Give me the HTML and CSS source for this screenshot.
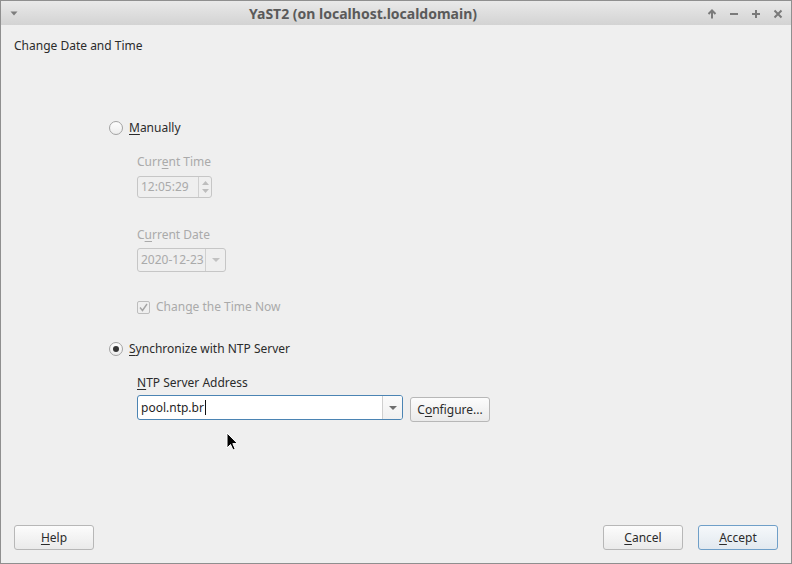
FILE: index.html
```html
<!DOCTYPE html>
<html lang="en">
<head>
<meta charset="utf-8">
<title>YaST2</title>
<link rel="stylesheet" href="styles.css">
</head>
<body>
<div class="window">
  <header class="titlebar">
    <span class="tb-menu">
      <svg width="8" height="5" viewBox="0 0 8 5"><path d="M0.5 0.5 H7.5 L4 4.5 Z" fill="#7d7d7d"/></svg>
    </span>
    <span class="tb-title">YaST2 (on localhost.localdomain)</span>
    <span class="tb-buttons">
      <span class="tb-btn"><svg width="10" height="10" viewBox="0 0 10 10"><path d="M5 9.5 V1.5 M1.5 5 L5 1.5 L8.5 5" fill="none" stroke="#7a7a7a" stroke-width="2"/></svg></span>
      <span class="tb-btn"><svg width="10" height="10" viewBox="0 0 10 10"><path d="M1 5 H9" fill="none" stroke="#7a7a7a" stroke-width="2"/></svg></span>
      <span class="tb-btn"><svg width="10" height="10" viewBox="0 0 10 10"><path d="M1 5 H9 M5 1 V9" fill="none" stroke="#7a7a7a" stroke-width="2"/></svg></span>
      <span class="tb-btn"><svg width="10" height="10" viewBox="0 0 10 10"><path d="M1.5 1.5 L8.5 8.5 M8.5 1.5 L1.5 8.5" fill="none" stroke="#7a7a7a" stroke-width="2"/></svg></span>
    </span>
  </header>

  <main class="content">
    <h1 class="heading">Change Date and Time</h1>

    <div class="form">
      <div class="radio-row">
        <span class="radio"></span>
        <span><u>M</u>anually</span>
      </div>
      <div class="sub">
        <div class="label disabled">Curr<u>e</u>nt Time</div>
        <div class="spin">
          <span class="field-text disabled">12:05:29</span>
          <span class="spin-btns">
            <svg width="7" height="4" viewBox="0 0 7 4"><path d="M0 4 L3.5 0 L7 4 Z" fill="#bdbdbd"/></svg>
            <svg width="7" height="4" viewBox="0 0 7 4"><path d="M0 0 L3.5 4 L7 0 Z" fill="#bdbdbd"/></svg>
          </span>
        </div>
        <div class="label disabled date-label">C<u>u</u>rrent Date</div>
        <div class="combo date-combo">
          <span class="field-text disabled">2020-12-23</span>
          <span class="combo-btn">
            <svg width="8" height="4" viewBox="0 0 8 4"><path d="M0 0 H8 L4 4 Z" fill="#c2c2c2"/></svg>
          </span>
        </div>
        <div class="check-row disabled">
          <span class="checkbox">
            <svg width="11" height="11" viewBox="0 0 11 11"><path d="M2 5.5 L4.5 8.5 L9 2" fill="none" stroke="#a5a5a5" stroke-width="1.4"/></svg>
          </span>
          <span>Chan<u>g</u>e the Time Now</span>
        </div>
      </div>

      <div class="radio-row sync-row">
        <span class="radio checked"></span>
        <span><u>S</u>ynchronize with NTP Server</span>
      </div>
      <div class="sub">
        <div class="label">
          <u>N</u>TP Server Address
        </div>
        <div class="ntp-row">
          <div class="combo ntp-combo">
            <span class="field-text">pool.ntp.br<span class="caret"></span></span>
            <span class="combo-btn">
              <svg width="8" height="4" viewBox="0 0 8 4"><path d="M0 0 H8 L4 4 Z" fill="#6e6e6e"/></svg>
            </span>
          </div>
          <button class="btn configure">C<u>o</u>nfigure...</button>
        </div>
      </div>
    </div>

    <footer class="buttons">
      <button class="btn"><u>H</u>elp</button>
      <div class="buttons-right">
        <button class="btn"><u>C</u>ancel</button>
        <button class="btn default"><u>A</u>ccept</button>
      </div>
    </footer>
  </main>

  <svg class="cursor" width="13" height="20" viewBox="0 0 13 20">
    <path d="M1 1 V16 L4.5 12.5 L7 18 L9.2 17 L6.8 11.6 L11.5 11.6 Z" fill="#000" stroke="#fff" stroke-width="1" stroke-linejoin="round"/>
  </svg>
</div>
</body>
</html>
```

FILE: styles.css
```css
* {
  box-sizing: border-box;
}

html, body {
  margin: 0;
  padding: 0;
  background: #efefef;
}

body {
  font-family: "Noto Sans", "Open Sans", sans-serif;
  font-size: 12px;
  line-height: 16px;
  color: #2b2b2b;
}

u {
  text-decoration: underline;
  text-underline-offset: 2px;
  text-decoration-thickness: 1px;
}

.window {
  position: relative;
  width: 792px;
  height: 564px;
  border: 1px solid #8f8f8f;
  background: #efefef;
  display: flex;
  flex-direction: column;
}

/* Title bar */
.titlebar {
  flex: none;
  height: 24px;
  display: flex;
  align-items: center;
  background: linear-gradient(#e9e9e9, #d3d3d3);
}

.tb-menu {
  width: 24px;
  display: flex;
  justify-content: center;
  padding-left: 2px;
  padding-top: 1px;
}

.tb-title {
  flex: 1;
  text-align: center;
  font-weight: bold;
  font-size: 14px;
  color: #5a5a5a;
  padding-top: 1px;
}

.tb-buttons {
  width: 90px;
  display: flex;
  padding-right: 2px;
}

.tb-btn {
  width: 22px;
  display: flex;
  justify-content: center;
  align-items: center;
  padding-top: 1px;
}

/* Content */
.content {
  flex: 1;
  display: flex;
  flex-direction: column;
  padding: 13px 13px 13px 13px;
}

.heading {
  margin: 0;
  font-size: 12px;
  font-weight: normal;
  line-height: 16px;
}

.form {
  margin-left: 95px;
  margin-top: 66px;
  display: flex;
  flex-direction: column;
  align-items: flex-start;
}

.radio-row {
  display: flex;
  align-items: center;
  gap: 6px;
  height: 16px;
}

.sync-row {
  margin-top: 26px;
}

.radio {
  width: 14px;
  height: 14px;
  border-radius: 50%;
  border: 1px solid #a3a3a3;
  background: linear-gradient(#fdfdfd, #ededed);
  display: flex;
  align-items: center;
  justify-content: center;
}

.radio.checked::after {
  content: "";
  width: 6px;
  height: 6px;
  border-radius: 50%;
  background: #353535;
}

.sub {
  margin-left: 28px;
  display: flex;
  flex-direction: column;
  align-items: flex-start;
}

.label {
  margin-top: 18px;
}

.date-label {
  margin-top: 29px;
}

.disabled {
  color: #aaaaaa;
}

.field-text {
  flex: 1;
  padding-left: 3px;
  display: flex;
  align-items: center;
}

/* Spin box */
.spin {
  margin-top: 6px;
  width: 75px;
  height: 22px;
  border: 1px solid #c6c6c6;
  border-radius: 3px;
  display: flex;
}

.spin-btns {
  width: 13px;
  border-left: 1px solid #d0d0d0;
  display: flex;
  flex-direction: column;
  align-items: center;
  justify-content: center;
  gap: 4px;
}

/* Combo boxes */
.combo {
  display: flex;
  border-radius: 3px;
}

.date-combo {
  margin-top: 5px;
  width: 89px;
  height: 24px;
  border: 1px solid #c6c6c6;
}

.combo-btn {
  width: 20px;
  border-left: 1px solid #d0d0d0;
  display: flex;
  align-items: center;
  justify-content: center;
}

.check-row {
  margin-top: 27px;
  display: flex;
  align-items: center;
  gap: 6px;
  height: 16px;
}

.checkbox {
  width: 13px;
  height: 13px;
  border: 1px solid #bdbdbd;
  border-radius: 2px;
  display: flex;
  align-items: center;
  justify-content: center;
}

.ntp-row {
  margin-top: 4px;
  display: flex;
  align-items: flex-start;
  gap: 7px;
}

.ntp-combo {
  width: 266px;
  height: 25px;
  border: 1px solid #4b84b3;
  background: #ffffff;
}

.ntp-combo .field-text {
  color: #1f1f1f;
}

.ntp-combo .combo-btn {
  background: linear-gradient(#fbfbfb, #f0f0f0);
  border-left-color: #cfcfcf;
  border-radius: 0 2px 2px 0;
}

.caret {
  display: inline-block;
  width: 1px;
  height: 15px;
  background: #111;
  margin-left: 1px;
}

/* Buttons */
.btn {
  width: 80px;
  height: 25px;
  padding: 0;
  border: 1px solid #b7b7b7;
  border-radius: 3px;
  background: linear-gradient(#fcfcfc, #eaeaea);
  font-family: inherit;
  font-size: 12px;
  line-height: 16px;
  color: #2b2b2b;
}

.configure {
  margin-top: 2px;
}

.btn.default {
  border-color: #6f9fc8;
  background: linear-gradient(#f5f8fb, #e2e9ef);
}

.buttons {
  margin-top: auto;
  display: flex;
  justify-content: space-between;
}

.buttons-right {
  display: flex;
  gap: 15px;
}

.cursor {
  position: absolute;
  left: 225px;
  top: 431px;
}
```
